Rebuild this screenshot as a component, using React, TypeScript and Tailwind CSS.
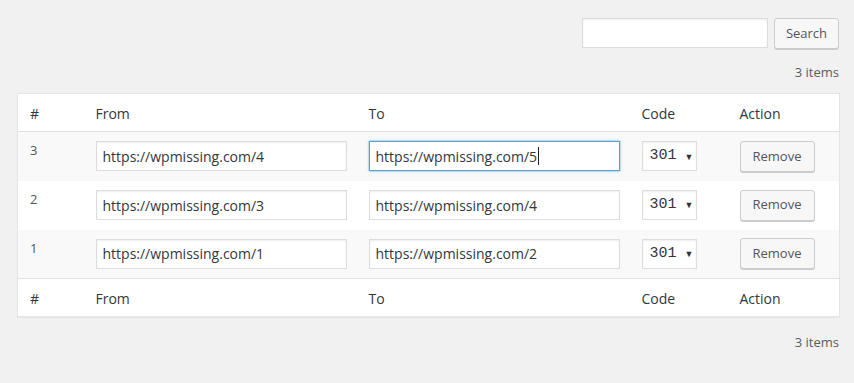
const rows = [
  { id: 3, from: "https://wpmissing.com/4", to: "https://wpmissing.com/5", focused: true, striped: true },
  { id: 2, from: "https://wpmissing.com/3", to: "https://wpmissing.com/4", focused: false, striped: false },
  { id: 1, from: "https://wpmissing.com/1", to: "https://wpmissing.com/2", focused: false, striped: true },
]

const font = { fontFamily: '"Open Sans", "Noto Sans", sans-serif' }

function Button({ label, wide }: { label: string; wide?: boolean }) {
  return (
    <button
      className={
        wide
          ? "h-[31px] w-[75px] rounded-[3px] border border-[#cccccc] bg-[#f7f7f7] text-[13px] text-[#555555] shadow-[0_1px_0_#cccccc]"
          : "h-[31px] w-[65px] rounded-[3px] border border-[#cccccc] bg-[#f7f7f7] text-[13px] text-[#555555] shadow-[0_1px_0_#cccccc]"
      }
    >
      {label}
    </button>
  )
}

function HeadRow({ border }: { border: "b" | "t" }) {
  return (
    <tr className={border === "b" ? "border-b border-[#e1e1e1]" : "border-t border-[#e1e1e1]"}>
      <th className="h-[38px] pl-[12px] pt-[1px] text-left text-[14px] font-normal text-[#32373c]">#</th>
      <th className="pl-[10px] pt-[1px] text-left text-[14px] font-normal text-[#32373c]">From</th>
      <th className="pl-[10px] pt-[1px] text-left text-[14px] font-normal text-[#32373c]">To</th>
      <th className="pl-[10px] pt-[1px] text-left text-[14px] font-normal text-[#32373c]">Code</th>
      <th className="pl-[10px] pt-[1px] text-left text-[14px] font-normal text-[#32373c]">Action</th>
    </tr>
  )
}

const inputBase =
  "flex h-[30px] w-[251px] items-center border bg-white px-[6px] text-[14px] text-[#32373c]"

export default function App() {
  return (
    <div className="min-h-[383px] w-[854px] bg-[#f1f1f1] px-[15px] pt-[18px]" style={font}>
      <div className="flex justify-end gap-[6px]">
        <input className="h-[30px] w-[186px] border border-[#dddddd] bg-white shadow-[inset_0_1px_2px_rgba(0,0,0,0.07)] outline-none" />
        <Button label="Search" />
      </div>
      <div className="mt-[15px] text-right text-[13px] leading-[16px] text-[#555d66]">3 items</div>

      <table className="mt-[13px] ml-[2px] w-[823px] table-fixed border-collapse border border-[#e5e5e5] bg-white shadow-[0_1px_1px_rgba(0,0,0,0.04)]">
        <colgroup>
          <col className="w-[68px]" />
          <col className="w-[273px]" />
          <col className="w-[273px]" />
          <col className="w-[98px]" />
          <col />
        </colgroup>
        <thead>
          <HeadRow border="b" />
        </thead>
        <tbody>
          {rows.map((r) => (
            <tr key={r.id} className={r.striped ? "bg-[#f9f9f9]" : "bg-white"}>
              <td className="h-[49px] pl-[12px] pt-[9px] align-top text-[13px] text-[#555555]">{r.id}</td>
              <td className="pl-[10px] align-middle">
                <div className={inputBase + " border-[#dddddd] shadow-[inset_0_1px_2px_rgba(0,0,0,0.07)]"}>{r.from}</div>
              </td>
              <td className="pl-[10px] align-middle">
                <div
                  className={
                    r.focused
                      ? inputBase + " border-[#5b9dd9] shadow-[0_0_2px_rgba(30,140,190,0.8)]"
                      : inputBase + " border-[#dddddd] shadow-[inset_0_1px_2px_rgba(0,0,0,0.07)]"
                  }
                >
                  {r.to}
                  {r.focused && <span className="ml-[1px] inline-block h-[18px] w-px bg-[#222222]" />}
                </div>
              </td>
              <td className="pl-[10px] align-middle">
                <div className="flex h-[30px] w-[55px] items-center border border-[#dddddd] bg-white pl-[7px] text-[#32373c] shadow-[inset_0_1px_2px_rgba(0,0,0,0.07)]">
                  <span className="text-[15px]" style={{ fontFamily: '"Liberation Mono", monospace' }}>301</span>
                  <span className="ml-[8px] text-[9px] text-[#333333]">▼</span>
                </div>
              </td>
              <td className="pl-[10px] align-middle">
                <Button label="Remove" wide />
              </td>
            </tr>
          ))}
        </tbody>
        <tfoot>
          <HeadRow border="t" />
        </tfoot>
      </table>

      <div className="mt-[17px] text-right text-[13px] leading-[16px] text-[#555d66]">3 items</div>
    </div>
  )
}
